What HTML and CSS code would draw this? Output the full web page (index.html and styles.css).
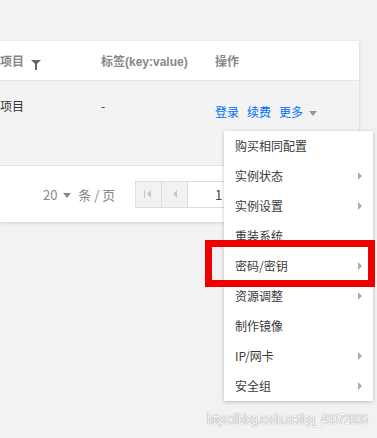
FILE: index.html
```html
<!DOCTYPE html>
<html lang="zh-CN">
<head>
    <meta charset="UTF-8">
    <title>实例列表</title>
    <link rel="stylesheet" href="styles.css">
</head>
<body>
    <div class="card">
        <div class="thead">
            <div class="th">项目 <span class="filter"></span></div>
            <div class="th">标签(key:value)</div>
            <div class="th">操作</div>
        </div>
        <div class="trow">
            <div class="td">项目</div>
            <div class="td">-</div>
            <div class="td ops">
                <a>登录</a>
                <a>续费</a>
                <a>更多 <span class="caret"></span></a>
            </div>
        </div>
        <div class="pager">
            <span class="size">20 <span class="caret gray"></span></span>
            <span class="unit">条 / 页</span>
            <div class="pages">
                <span class="btn"><span class="first"></span></span>
                <span class="btn"><span class="prev"></span></span>
                <span class="page-input">1</span>
            </div>
        </div>
    </div>

    <ul class="menu">
        <li>购买相同配置</li>
        <li class="sub">实例状态</li>
        <li class="sub">实例设置</li>
        <li>重装系统</li>
        <li class="sub">密码/密钥</li>
        <li class="sub">资源调整</li>
        <li>制作镜像</li>
        <li class="sub">IP/网卡</li>
        <li class="sub">安全组</li>
    </ul>

    <div class="mark"></div>
    <div class="watermark">https://blog.csdn.net/qq_40072606</div>
</body>
</html>
```

FILE: styles.css
```css
body {
    margin: 0;
    background: #f2f2f2;
    font-family: "Noto Sans CJK SC", "Liberation Sans", sans-serif;
    font-size: 12px;
    color: #333;
    width: 377px;
    height: 438px;
    overflow: hidden;
    position: relative;
}
.card {
    margin-top: 41px;
    width: 359px;
    background: #fff;
    box-shadow: 0 1px 3px rgba(0, 0, 0, 0.15);
}
.thead, .trow {
    display: grid;
    grid-template-columns: 101px 114px 1fr;
}
.thead {
    height: 39px;
    align-items: center;
    border-bottom: 1px solid #e5e5e5;
}
.th {
    color: #888;
    font-weight: bold;
    font-family: "Liberation Sans", "Noto Sans CJK SC", sans-serif;
}
.filter {
    display: inline-block;
    margin-left: 4px;
    width: 0;
    height: 0;
    border-left: 5px solid transparent;
    border-right: 5px solid transparent;
    border-top: 5px solid #666;
    position: relative;
    top: -1px;
}
.filter::after {
    content: "";
    position: absolute;
    left: -1px;
    top: -2px;
    width: 2px;
    height: 7px;
    background: #666;
}
.trow {
    height: 84px;
    background: #f3f3f3;
    border-bottom: 1px solid #e5e5e5;
}
.td {
    padding-top: 16px;
    line-height: 18px;
}
.ops {
    padding-top: 22px;
    display: flex;
    gap: 8px;
}
.ops a {
    color: #006eff;
}
.caret {
    display: inline-block;
    margin-left: 3px;
    border-left: 4px solid transparent;
    border-right: 4px solid transparent;
    border-top: 5px solid #999;
    vertical-align: middle;
}
.caret.gray {
    border-top-color: #888;
    margin-left: 3px;
}
.pager {
    height: 56px;
    display: flex;
    align-items: center;
    padding-left: 43px;
    color: #888;
    font-size: 13px;
}
.unit {
    margin-left: 7px;
}
.pages {
    margin-left: 20px;
    display: flex;
    height: 25px;
    border: 1px solid #ddd;
}
.btn {
    width: 25px;
    background: #f2f2f2;
    border-right: 1px solid #ddd;
    display: flex;
    align-items: center;
    justify-content: center;
}
.first, .prev {
    width: 0;
    height: 0;
    border-top: 4px solid transparent;
    border-bottom: 4px solid transparent;
    border-right: 4px solid #c8c8c8;
}
.first {
    box-shadow: -2px 0 0 #f2f2f2, -3px 0 0 #c8c8c8;
}
.page-input {
    width: 34px;
    text-align: right;
    line-height: 25px;
    color: #444;
    padding-right: 12px;
}
.menu {
    position: absolute;
    left: 224px;
    top: 131px;
    width: 149px;
    margin: 0;
    padding: 0;
    list-style: none;
    background: #fff;
    box-shadow: 0 1px 4px rgba(0, 0, 0, 0.22);
}
.menu li {
    height: 30px;
    line-height: 30px;
    padding-left: 11px;
    color: #3a3a3a;
    position: relative;
}
.menu .sub::after {
    content: "";
    position: absolute;
    right: 11px;
    top: 11px;
    border-top: 4px solid transparent;
    border-bottom: 4px solid transparent;
    border-left: 4px solid #aaa;
}
.mark {
    position: absolute;
    left: 205px;
    top: 240px;
    width: 156px;
    height: 33px;
    border: 7px solid #ee0000;
}
.watermark {
    position: absolute;
    left: 207px;
    top: 410px;
    font-family: "Liberation Sans", sans-serif;
    font-size: 15px;
    color: #fff;
    text-shadow: 0 0 1px #999, 0 0 1px #999;
    letter-spacing: -0.4px;
    white-space: nowrap;
    transform: scaleX(0.74);
    transform-origin: left top;
}
```
